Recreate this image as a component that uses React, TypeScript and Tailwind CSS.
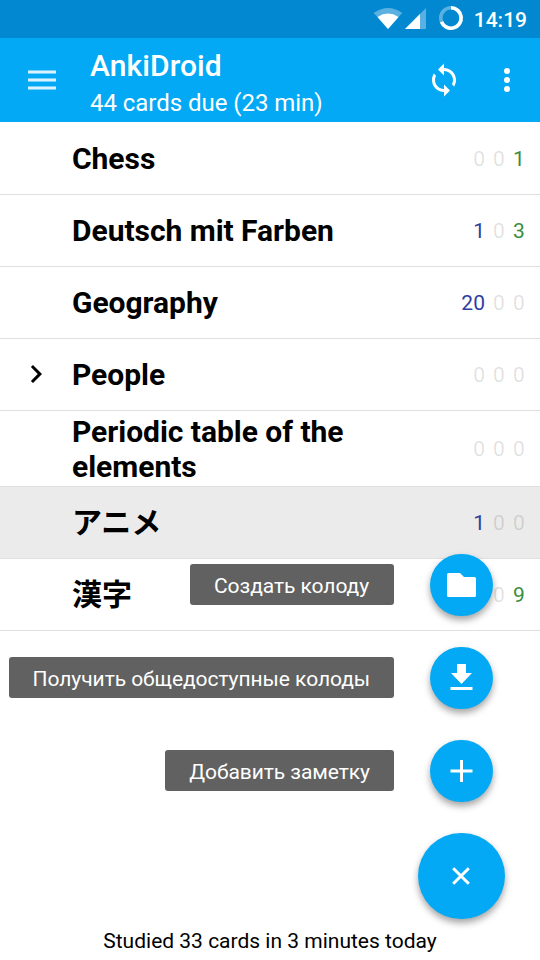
import React from "react";

type Tone = "off" | "blue" | "green";

interface Deck {
  name: string;
  counts: [string, Tone][];
  height: string;
  expandable?: boolean;
  selected?: boolean;
}

const toneClass: Record<Tone, string> = {
  off: "text-black/12",
  blue: "text-[#303f9f]",
  green: "text-[#388e3c]",
};

const decks: Deck[] = [
  { name: "Chess", counts: [["0", "off"], ["0", "off"], ["1", "green"]], height: "h-[73px]" },
  { name: "Deutsch mit Farben", counts: [["1", "blue"], ["0", "off"], ["3", "green"]], height: "h-[72px]" },
  { name: "Geography", counts: [["20", "blue"], ["0", "off"], ["0", "off"]], height: "h-[72px]" },
  { name: "People", counts: [["0", "off"], ["0", "off"], ["0", "off"]], height: "h-[72px]", expandable: true },
  { name: "Periodic table of the elements", counts: [["0", "off"], ["0", "off"], ["0", "off"]], height: "h-[76px]" },
  { name: "アニメ", counts: [["1", "blue"], ["0", "off"], ["0", "off"]], height: "h-[72px]", selected: true },
  { name: "漢字", counts: [["0", "off"], ["0", "off"], ["9", "green"]], height: "h-[72px]" },
];

function StatusBar() {
  return (
    <div className="flex h-[38px] items-center justify-end bg-[#0288d1] pr-[13px] text-white">
      <svg className="h-[38px] w-[90px]" viewBox="374 0 90 38" fill="#fff">
        <path d="M373.8 13Q388 3 402.2 13L388 29Z" opacity=".35" />
        <path d="M377.5 17Q388 10.2 398.5 17L388 29Z" />
        <path d="M426 8V29H405Z" opacity=".35" />
        <path d="M420 14V29H405Z" />
        <circle cx="451" cy="18" r="10.2" fill="none" stroke="#fff" strokeWidth="3.6" opacity=".35" />
        <path d="M451 7.8A10.2 10.2 0 1 1 441.5 21.8" fill="none" stroke="#fff" strokeWidth="3.6" />
      </svg>
      <span className="ml-[10px] pt-px text-[21px] leading-[38px] font-medium">14:19</span>
    </div>
  );
}

function AppBar() {
  return (
    <header className="flex h-[84px] items-center bg-[#03a9f4] text-white">
      <div className="ml-7 flex w-7 flex-col gap-1">
        <i className="h-1 border-y border-white/45 bg-white/85 bg-clip-padding" />
        <i className="h-1 border-y border-white/45 bg-white/85 bg-clip-padding" />
        <i className="h-1 border-y border-white/45 bg-white/85 bg-clip-padding" />
      </div>
      <div className="ml-[34px] flex-1 pt-1">
        <h1 className="text-[30px] leading-[35px] font-medium tracking-[0.09px]">AnkiDroid</h1>
        <p className="mt-1.5 text-[24px] leading-[28px] tracking-[-0.04px]">44 cards due (23 min)</p>
      </div>
      <svg className="mr-[42px] h-9 w-9" viewBox="0 0 24 24" fill="#fff">
        <path d="M12 4V1L8 5l4 4V6c3.31 0 6 2.69 6 6 0 1.01-.25 1.97-.7 2.8l1.46 1.46C19.54 15.03 20 13.57 20 12c0-4.42-3.58-8-8-8zm0 14c-3.31 0-6-2.69-6-6 0-1.01.25-1.97.7-2.8L5.24 7.74C4.46 8.97 4 10.43 4 12c0 4.42 3.58 8 8 8v3l4-4-4-4v3z" />
      </svg>
      <div className="mr-[30px] flex flex-col gap-[3px]">
        <i className="size-1.5 rounded-full bg-white" />
        <i className="size-1.5 rounded-full bg-white" />
        <i className="size-1.5 rounded-full bg-white" />
      </div>
    </header>
  );
}

function DeckRow({ deck }: { deck: Deck }) {
  return (
    <li className={`flex items-center border-b border-[#e0e0e0] ${deck.height} ${deck.selected ? "bg-[#ebebeb]" : ""}`}>
      <div className="flex w-[72px] justify-center pb-0.5">
        {deck.expandable && (
          <svg className="h-9 w-9" viewBox="0 0 24 24">
            <path d="M10 6L8.59 7.41 13.17 12l-4.58 4.59L10 18l6-6z" />
          </svg>
        )}
      </div>
      <span className="w-[300px] text-[30px] leading-[35px] font-bold tracking-[-0.03px]">{deck.name}</span>
      <div className="ml-auto flex gap-2 pt-0.5 pr-[15px] text-[21px] leading-[25px]">
        {deck.counts.map(([value, tone], i) => (
          <span key={i} className={`tracking-[0.15px] ${toneClass[tone]}`}>{value}</span>
        ))}
      </div>
    </li>
  );
}

function Action({ label, children }: { label: string; children: React.ReactNode }) {
  return (
    <div className="flex h-[62px] items-center justify-end gap-9">
      <span className="mb-px h-[41px] min-w-[204px] rounded-[3px] bg-[#616161] px-6 pt-px text-[21px] leading-[42px] tracking-[-0.06px] whitespace-nowrap text-white">
        {label}
      </span>
      <button className="flex h-[62px] w-[63px] items-center justify-center rounded-full bg-[#03a9f4] pr-px shadow-[0_4px_7px_rgba(0,0,0,0.36)]">
        {children}
      </button>
    </div>
  );
}

export default function App() {
  return (
    <div className="relative flex h-[960px] w-[540px] flex-col overflow-hidden bg-white font-[Roboto,'Noto_Sans_CJK_JP',sans-serif] text-black">
      <StatusBar />
      <AppBar />
      <ul>
        {decks.map((deck) => (
          <DeckRow key={deck.name} deck={deck} />
        ))}
      </ul>
      <p className="mt-auto h-[32px] text-center text-[21px] leading-[27px]">Studied 33 cards in 3 minutes today</p>

      <div className="absolute top-[554px] right-[47px] flex flex-col gap-[31px]">
        <Action label="Создать колоду">
          <svg className="h-9 w-9" viewBox="0 0 36 36" fill="#fff">
            <path d="M5.500 6h11.500l4 4h10.500a1.500 1.500 0 0 1 1.500 1.500v17a1.500 1.500 0 0 1-1.500 1.500h-26a1.500 1.500 0 0 1-1.500-1.500v-21a1.500 1.500 0 0 1 1.500-1.500z" />
          </svg>
        </Action>
        <Action label="Получить общедоступные колоды">
          <svg className="h-9 w-9" viewBox="0 0 36 36" fill="#fff">
            <path d="M14 4h9v9h6L18.500 24 8 13h6zM7.500 27h22v3h-22z" />
          </svg>
        </Action>
        <Action label="Добавить заметку">
          <svg className="h-9 w-9" viewBox="0 0 36 36" fill="none" stroke="#fff" strokeWidth="3">
            <path d="M18.500 7v22M7.500 18h22" />
          </svg>
        </Action>
      </div>
      <button className="absolute top-[833px] left-[418px] flex h-[86px] w-[87px] items-center justify-center rounded-full bg-[#03a9f4] pr-px shadow-[0_4px_7px_rgba(0,0,0,0.36)]">
        <svg className="h-9 w-9" viewBox="0 0 36 36" fill="none" stroke="#fff" strokeWidth="3">
          <path d="M10.200 10.200l15.600 15.600M25.800 10.200L10.200 25.800" />
        </svg>
      </button>
    </div>
  );
}
